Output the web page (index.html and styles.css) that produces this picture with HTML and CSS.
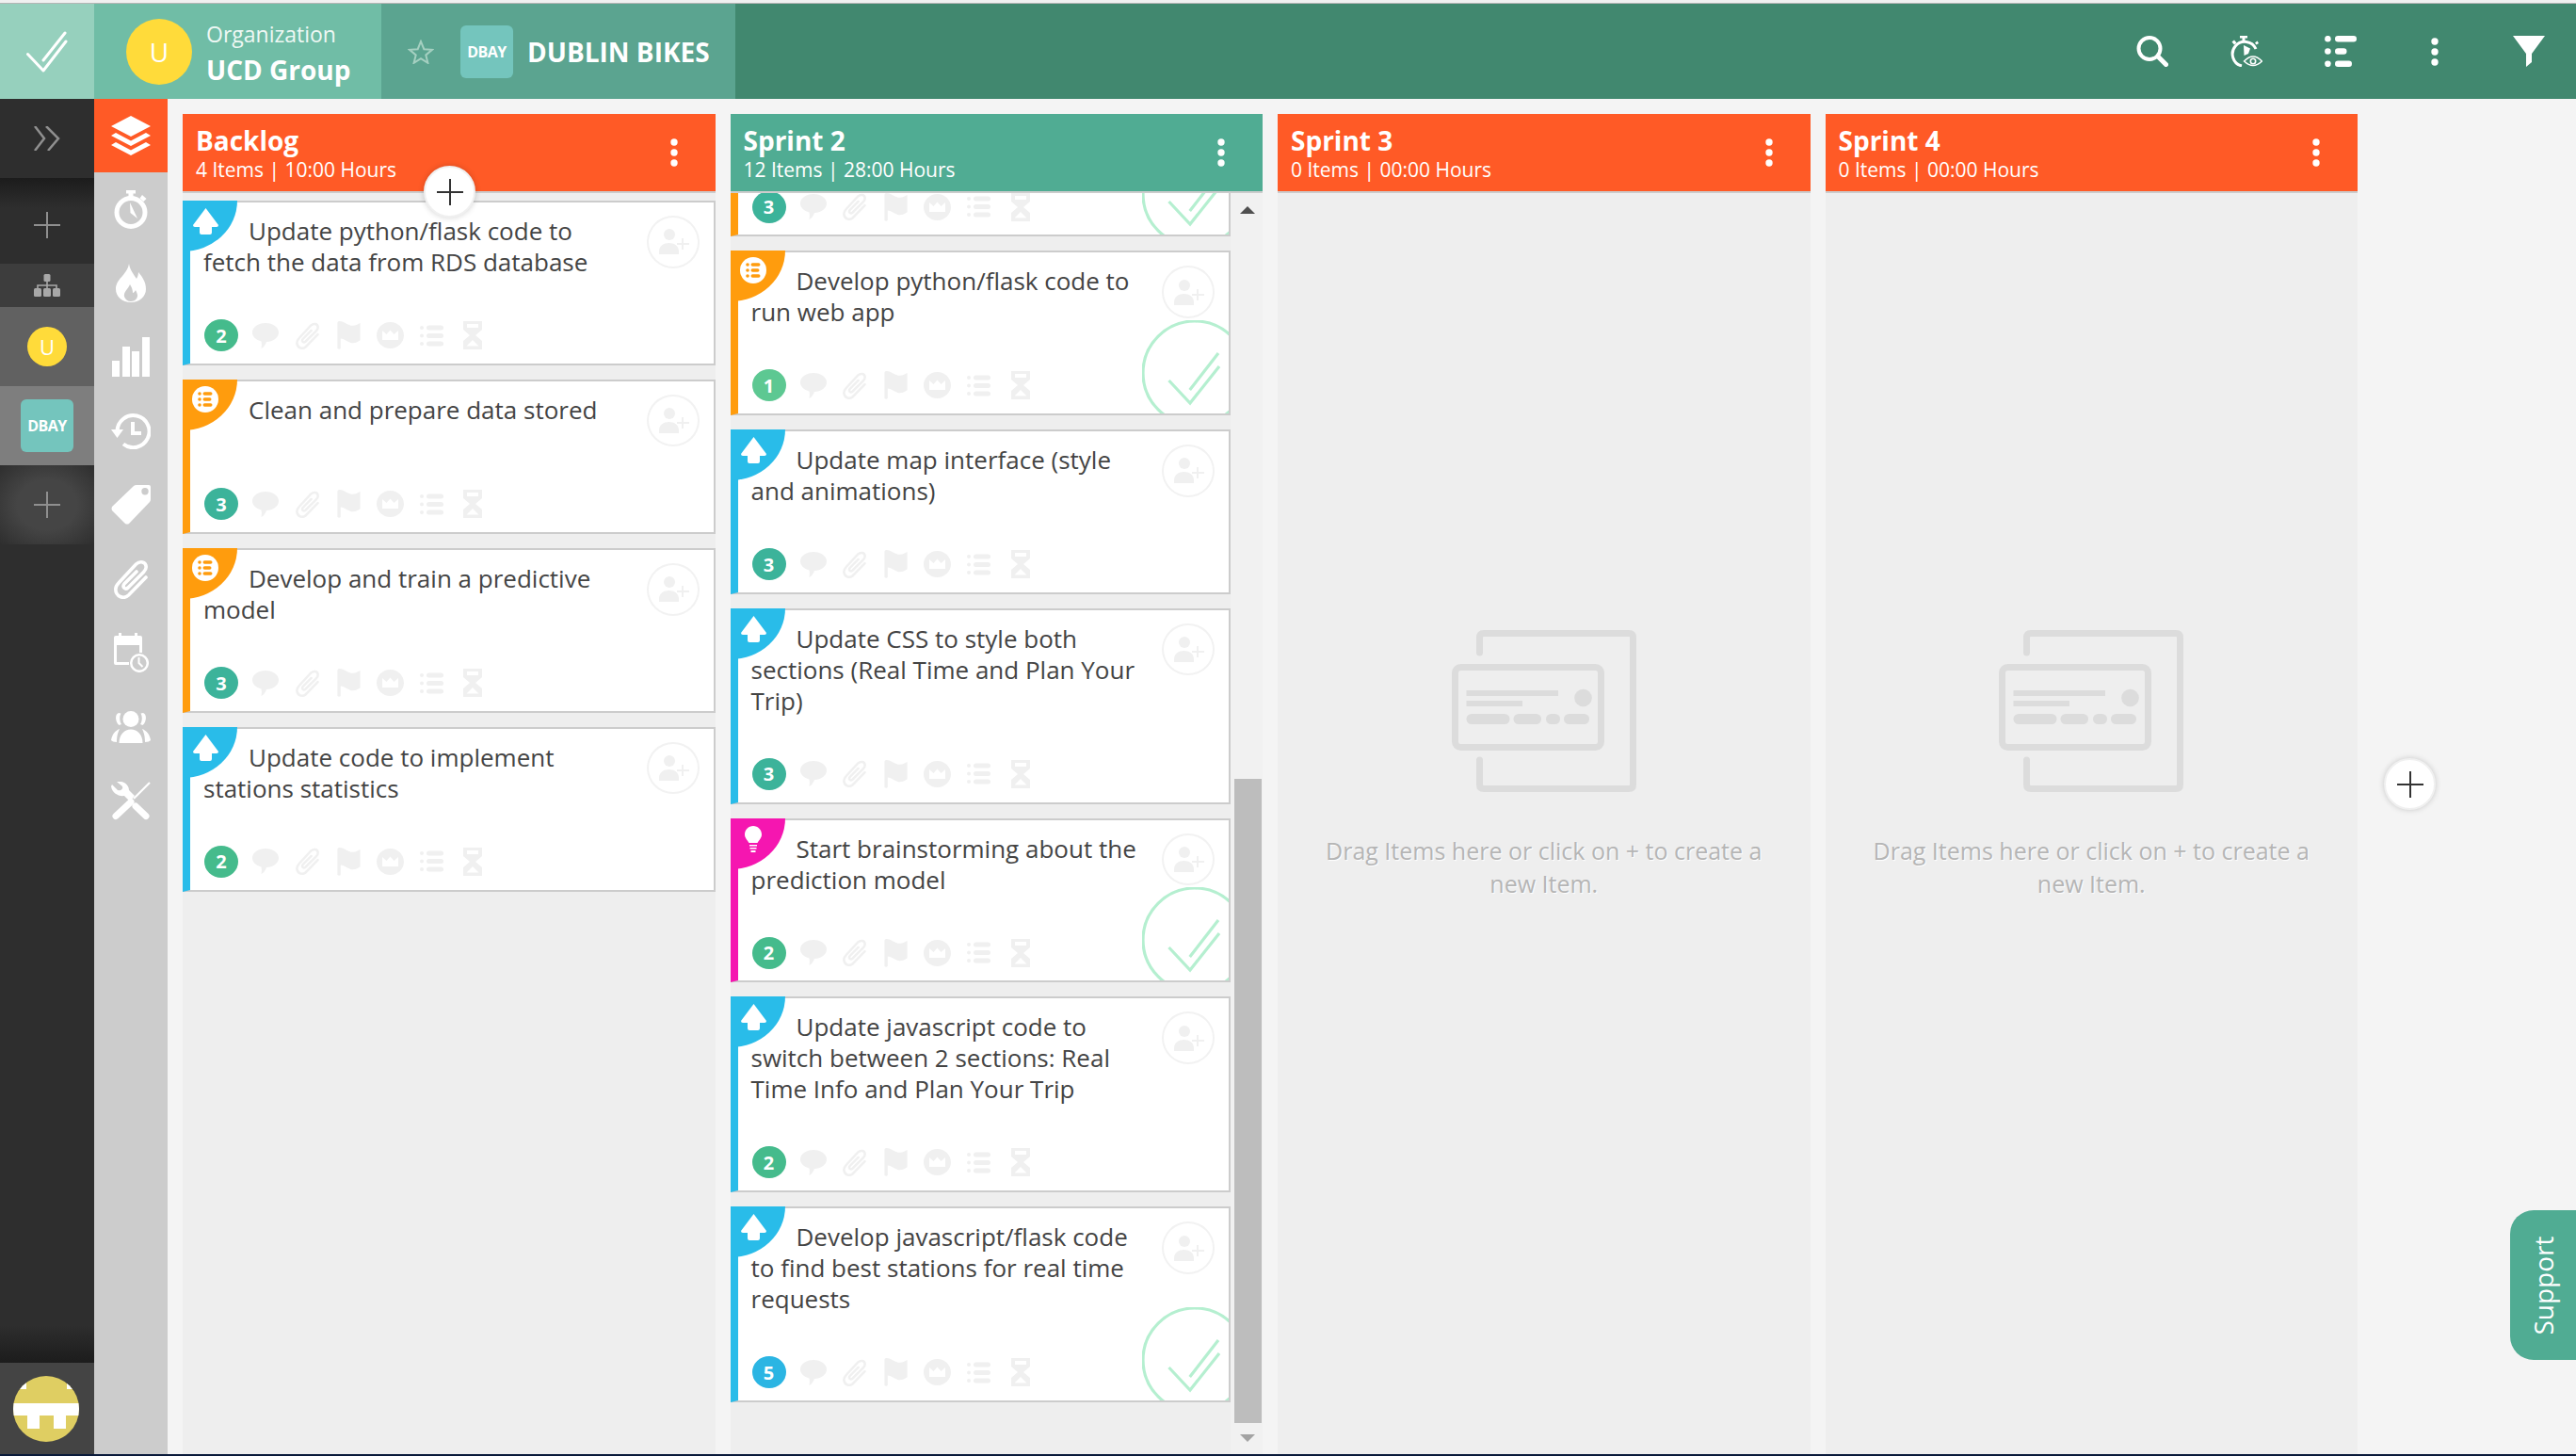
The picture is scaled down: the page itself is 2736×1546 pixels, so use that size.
FILE: index.html
```html
<!DOCTYPE html>
<html lang="en">
<head>
    <meta charset="UTF-8">
    <title>Dublin Bikes</title>
    <link rel="stylesheet" href="styles.css">
</head>
<body>

<svg class="defs" width="0" height="0">
    <symbol id="i-check" viewBox="0 0 44 44">
        <path d="M1.500 24.500 L18 42 L42 11 M18 31 L41 2" fill="none" stroke="currentColor" stroke-width="3" stroke-linecap="round" stroke-linejoin="round"/>
    </symbol>
    <symbol id="i-star" viewBox="0 0 28 26">
        <path d="M14 2 L17.3 10.2 L26 10.8 L19.3 16.4 L21.4 24.8 L14 20.2 L6.6 24.8 L8.7 16.4 L2 10.8 L10.7 10.2 Z" fill="none" stroke="currentColor" stroke-width="2"/>
    </symbol>
    <symbol id="i-search" viewBox="0 0 34 33">
        <circle cx="14" cy="13.5" r="11.5" fill="none" stroke="currentColor" stroke-width="4"/>
        <path d="M23 22 L31.5 30.5" stroke="currentColor" stroke-width="5" stroke-linecap="round"/>
    </symbol>
    <symbol id="i-watch-eye" viewBox="0 0 34 33">
        <path d="M27 14 A13 13 0 1 0 12 32" fill="none" stroke="currentColor" stroke-width="3"/>
        <path d="M10 0 H18 V2.5 H15.5 V6 H12.5 V2.5 H10 Z M1.5 6.5 L4 4.5 L6.5 7.5 L4 9.5 Z M26 7.5 L28.5 5.5 L30 8 L27.5 9.5 Z M14 10 L21 13.5 L19 19 L14.5 21 Z" fill="currentColor"/>
        <path d="M14.5 27 Q24 17 33.5 27 Q24 36 14.5 27 Z" fill="none" stroke="currentColor" stroke-width="1.5"/>
        <circle cx="24" cy="27" r="2.7" fill="none" stroke="currentColor" stroke-width="1.6"/>
    </symbol>
    <symbol id="i-list" viewBox="0 0 34 33">
        <circle cx="3.4" cy="3.2" r="3.3" fill="currentColor"/>
        <circle cx="3.4" cy="16.5" r="3.3" fill="currentColor"/>
        <circle cx="3.4" cy="29.8" r="3.3" fill="currentColor"/>
        <rect x="11" y="0" width="23" height="6.4" rx="3.2" fill="currentColor"/>
        <rect x="11" y="13.3" width="12.5" height="6.4" rx="3.2" fill="currentColor"/>
        <rect x="11" y="26.6" width="18" height="6.4" rx="3.2" fill="currentColor"/>
    </symbol>
    <symbol id="i-kebab" viewBox="0 0 8 30">
        <circle cx="4" cy="4" r="3.7" fill="currentColor"/>
        <circle cx="4" cy="15" r="3.7" fill="currentColor"/>
        <circle cx="4" cy="26" r="3.7" fill="currentColor"/>
    </symbol>
    <symbol id="i-funnel" viewBox="0 0 34 33">
        <path d="M0 0 H34 L20 19 V28 L14 33 V19 Z" fill="currentColor"/>
    </symbol>
    <symbol id="i-chevrons" viewBox="0 0 28 26">
        <path d="M1 0 L11 13 L1 26 M13 0 L26 13 L15 26" fill="none" stroke="currentColor" stroke-width="2.5"/>
    </symbol>
    <symbol id="i-plus" viewBox="0 0 28 28">
        <path d="M14 0 V28 M0 14 H28" stroke="currentColor" stroke-width="2"/>
    </symbol>
    <symbol id="i-tree" viewBox="0 0 28 24">
        <rect x="10.5" y="0" width="7" height="8" rx="1.5" fill="currentColor"/>
        <path d="M14 8 V16 M4 16 V12 H24 V16" fill="none" stroke="currentColor" stroke-width="1.6"/>
        <rect x="0" y="15" width="8" height="9" rx="1.5" fill="currentColor"/>
        <rect x="10" y="15" width="8" height="9" rx="1.5" fill="currentColor"/>
        <rect x="20" y="15" width="8" height="9" rx="1.5" fill="currentColor"/>
    </symbol>
    <symbol id="i-layers" viewBox="0 0 42 42">
        <path d="M21 0 L42 11 L21 22 L0 11 Z M0 21 L5 18 L21 26.5 L37 18 L42 21 L21 32 Z M0 31 L5 28 L21 36.5 L37 28 L42 31 L21 42 Z" fill="currentColor"/>
    </symbol>
    <symbol id="i-stopwatch" viewBox="0 0 36 41">
        <circle cx="18" cy="23.5" r="15" fill="none" stroke="currentColor" stroke-width="5"/>
        <path d="M13 0 H23 V3.5 H20.5 V8 H15.5 V3.5 H13 Z M30 5 L34.5 9 L31.5 12 L27.5 8.5 Z M17 13 L25 30 L17.5 24 Z" fill="currentColor"/>
    </symbol>
    <symbol id="i-fire" viewBox="0 0 32 41">
        <path fill-rule="evenodd" d="M14 0 C15 7 19 11 22 16 C23 14 24 12 24 9 C29 15 32 20 32 27 C32 35 25 41 16 41 C7 41 0 35 0 27 C0 16 12 12 14 0 Z M15 22 C13 27 8 30 9 35 C10 38 13 40 16 40 C20 40 23 37 23 34 C23 32 22 30 21 28 C20 30 19 31 18 31 C18 28 17 25 15 22 Z" fill="currentColor"/>
    </symbol>
    <symbol id="i-bars" viewBox="0 0 40 42">
        <rect x="0" y="25" width="8" height="17" fill="currentColor"/>
        <rect x="11" y="10" width="8" height="32" fill="currentColor"/>
        <rect x="21" y="15" width="8" height="27" fill="currentColor"/>
        <rect x="32" y="0" width="8" height="42" fill="currentColor"/>
    </symbol>
    <symbol id="i-history" viewBox="0 0 42 38">
        <path d="M6.5 19 A17 17 0 1 1 13 32.5" fill="none" stroke="currentColor" stroke-width="4"/>
        <path d="M0 17 H13 L6.5 26 Z" fill="currentColor"/>
        <path d="M23 9 V21 H32" fill="none" stroke="currentColor" stroke-width="4"/>
    </symbol>
    <symbol id="i-tag" viewBox="0 0 42 42">
        <path fill-rule="evenodd" d="M1 23 L24 1 Q25 0 27 0 H40 Q42 0 42 2 V15 Q42 17 41 18 L19 41 Q17 42 15 41 L1 27 Q0 25 1 23 Z M36 3 A3.7 3.7 0 1 0 36.01 10.4 A3.7 3.7 0 1 0 36 3 Z" fill="currentColor"/>
    </symbol>
    <symbol id="i-clip" viewBox="0 0 36 42">
        <path d="M34 19 L15.500 38 C10 43 2 39 1.800 32 C1.800 29 3 27 5 25 L23.500 5 C27.500 1.500 34 2 34.200 8 C34.200 10.500 33 12 31.500 13.500 L15 30 C12 32.500 8.500 29.500 11 26 L24 13" fill="none" stroke="currentColor" stroke-width="3.600" stroke-linecap="round"/>
    </symbol>
    <symbol id="i-calendar" viewBox="0 0 37 42">
        <path d="M5 0 H8 V3 H22 V0 H25 V3 H28 Q30 3 30 5 V13 H0 V5 Q0 3 2 3 H5 Z M0 13 H3 V31 H16 V34 H2 Q0 34 0 32 Z M27 13 H30 V21 H27 Z" fill="currentColor"/>
        <circle cx="27" cy="32" r="8.8" fill="none" stroke="currentColor" stroke-width="2.5"/>
        <path d="M26.5 26 V32 L30.5 36" fill="none" stroke="currentColor" stroke-width="2"/>
    </symbol>
    <symbol id="i-users" viewBox="0 0 42 34">
        <circle cx="21" cy="8.5" r="8.5" fill="currentColor"/>
        <path d="M8.5 34 C8.5 25 14 19.5 21 19.5 C28 19.5 33.5 25 33.5 34 Z M8 2 C4 3 4 11 8.5 15 L11 14 C9 11 8.5 6 10.5 2.5 Z M34 2 C38 3 38 11 33.5 15 L31 14 C33 11 33.5 6 31.5 2.5 Z M0 31 C1 25 4 21 9 19 C7.5 22 6 26 6 33 C3 33 1 32 0 31 Z M42 31 C41 25 38 21 33 19 C34.5 22 36 26 36 33 C39 33 41 32 42 31 Z" fill="currentColor"/>
    </symbol>
    <symbol id="i-tools" viewBox="0 0 42 41">
        <path d="M41 1 L24 18" stroke="currentColor" stroke-width="2.2"/>
        <path d="M5 36.5 L21 21.5" stroke="currentColor" stroke-width="7" stroke-linecap="round"/>
        <path d="M26 26 L37 36.5" stroke="currentColor" stroke-width="7" stroke-linecap="round"/>
        <path d="M6 0 L11 0 C16 1 19 5 19 9 L25 15 L20 21 L14 15 C8 16 1 12 0 5 L1 3 L7 9 C10 10 13 8 12 5 Z" fill="currentColor"/>
    </symbol>
    <symbol id="i-up" viewBox="0 0 27 28">
        <path d="M13.5 0 L27 18 Q27 20 25 20 H20 V26 Q20 28 18 28 H9 Q7 28 7 26 V20 H2 Q0 20 0 18 Z" fill="currentColor"/>
    </symbol>
    <symbol id="i-task" viewBox="0 0 28 28">
        <circle cx="14" cy="14" r="14" fill="#fff"/>
        <g fill="currentColor">
            <circle cx="8" cy="8" r="1.8"/><circle cx="8" cy="14" r="1.8"/><circle cx="8" cy="20" r="1.8"/>
            <rect x="11.5" y="6.2" width="10" height="3.6" rx="1.8"/>
            <rect x="11.5" y="12.2" width="9" height="3.6" rx="1.8"/>
            <rect x="11.5" y="18.2" width="10" height="3.6" rx="1.8"/>
        </g>
    </symbol>
    <symbol id="i-bulb" viewBox="0 0 18 28">
        <path d="M9 0 C14 0 18 4 18 9 C18 13 15 15 13.5 18 H4.5 C3 15 0 13 0 9 C0 4 4 0 9 0 Z M5 20 H13 V21.5 H5 Z M5.5 23 H12.5 V24.5 H5.5 Z M6.5 26 H11.5 V28 H6.5 Z" fill="currentColor"/>
    </symbol>
    <symbol id="i-user-plus" viewBox="0 0 32 27">
        <circle cx="11" cy="6" r="6" fill="currentColor"/>
        <path d="M0 27 V24 C0 18 5 15 10.500 15 C16 15 21 18 21 24 V27 Z" fill="currentColor"/>
        <path d="M25 10 V22 M19 16 H32" stroke="currentColor" stroke-width="2"/>
    </symbol>
    <symbol id="i-comment" viewBox="0 0 28 27">
        <path d="M14 0 C22 0 28 4.5 28 10 C28 15.5 22 20 15 20 C14 23 12 26 9.5 27 C10 24 10 21.500 9.500 19.500 C4 18 0 14.500 0 10 C0 4.500 6 0 14 0 Z" fill="currentColor"/>
    </symbol>
    <symbol id="i-flag" viewBox="0 0 25 31">
        <path d="M0 2 Q0 0 2 0 C8 0 11 5 17 5 C20 5 23 3 25 2 V21 C22 23 20 24 17 24 C12 24 8 19 3.500 19 V30 Q2 31.500 0 30 Z" fill="currentColor"/>
    </symbol>
    <symbol id="i-crown" viewBox="0 0 29 28">
        <path fill-rule="evenodd" d="M14.500 0 C22.500 0 29 6.300 29 14 C29 21.700 22.500 28 14.500 28 C6.500 28 0 21.700 0 14 C0 6.300 6.500 0 14.500 0 Z M6 9 V19 H23 V9 L18.500 13 L14.500 8.500 L10.500 13 Z" fill="currentColor"/>
    </symbol>
    <symbol id="i-lines" viewBox="0 0 25 23">
        <circle cx="2" cy="3" r="2" fill="currentColor"/>
        <circle cx="2" cy="11.500" r="2" fill="currentColor"/>
        <circle cx="2" cy="20" r="2" fill="currentColor"/>
        <rect x="7" y="0.500" width="18" height="5" rx="2.500" fill="currentColor"/>
        <rect x="7" y="9" width="18" height="5" rx="2.500" fill="currentColor"/>
        <rect x="7" y="17.500" width="18" height="5" rx="2.500" fill="currentColor"/>
    </symbol>
    <symbol id="i-hourglass" viewBox="0 0 20 30">
        <path fill-rule="evenodd" d="M0 0 H20 V9 L13 15 L20 21 V30 H0 V21 L7 15 L0 9 Z M4 3 V7 H16 V3 Z M10 20 L3.500 26.500 H16.500 Z" fill="currentColor"/>
    </symbol>
    <symbol id="i-empty" viewBox="0 0 196 172">
        <path d="M29.500 24 V8 Q29.500 3.500 34 3.500 H188 Q192.500 3.500 192.500 8 V164 Q192.500 168.500 188 168.500 H34 Q29.500 168.500 29.500 164 V138" fill="none" stroke="currentColor" stroke-width="7" stroke-linecap="round"/>
        <rect x="3.500" y="39.500" width="155" height="85" rx="6" fill="none" stroke="currentColor" stroke-width="7"/>
        <rect x="15.500" y="64" width="97.500" height="6" fill="currentColor"/>
        <rect x="15.500" y="75" width="59.500" height="6" fill="currentColor"/>
        <rect x="15.500" y="89" width="46" height="11" rx="5.500" fill="currentColor"/>
        <rect x="65.500" y="89" width="29.500" height="11" rx="5.500" fill="currentColor"/>
        <rect x="100" y="89" width="15" height="11" rx="5.500" fill="currentColor"/>
        <rect x="119" y="89" width="27" height="11" rx="5.500" fill="currentColor"/>
        <circle cx="139.500" cy="72" r="9.300" fill="currentColor"/>
    </symbol>
</svg>

<div class="topline"></div>

<header class="topbar">
    <div class="logo"><svg class="logo-check"><use href="#i-check"/></svg></div>
    <div class="org">
        <span class="org-avatar">U</span>
        <div class="org-text">
            <div class="org-label">Organization</div>
            <div class="org-name">UCD Group</div>
        </div>
    </div>
    <div class="project">
        <svg class="star"><use href="#i-star"/></svg>
        <span class="dbay">DBAY</span>
        <span class="project-name">DUBLIN BIKES</span>
    </div>
    <div class="tools">
        <svg class="tool"><use href="#i-search"/></svg>
        <svg class="tool"><use href="#i-watch-eye"/></svg>
        <svg class="tool"><use href="#i-list"/></svg>
        <svg class="tool tool-kebab"><use href="#i-kebab"/></svg>
        <svg class="tool"><use href="#i-funnel"/></svg>
    </div>
</header>

<div class="app">
    <nav class="rail">
        <div class="rail-item rail-toggle"><svg class="rail-chev"><use href="#i-chevrons"/></svg></div>
        <div class="rail-item rail-add"><svg class="rail-plus"><use href="#i-plus"/></svg></div>
        <div class="rail-item rail-tree"><svg class="rail-tree-ic"><use href="#i-tree"/></svg></div>
        <div class="rail-item rail-org"><span class="rail-avatar">U</span></div>
        <div class="rail-item rail-proj"><span class="dbay">DBAY</span></div>
        <div class="rail-item rail-add2"><svg class="rail-plus"><use href="#i-plus"/></svg></div>
        <div class="rail-space"></div>
        <div class="rail-user">
            <span class="user-pic">
                <i class="pix pix1"></i><i class="pix pix2"></i><i class="pix pix3"></i><i class="pix pix4"></i><i class="pix pix5"></i>
            </span>
        </div>
    </nav>

    <nav class="iconrail">
        <div class="icon-item active"><svg class="ic-layers"><use href="#i-layers"/></svg></div>
        <div class="icon-item"><svg class="ic-watch"><use href="#i-stopwatch"/></svg></div>
        <div class="icon-item"><svg class="ic-fire"><use href="#i-fire"/></svg></div>
        <div class="icon-item"><svg class="ic-bars"><use href="#i-bars"/></svg></div>
        <div class="icon-item"><svg class="ic-history"><use href="#i-history"/></svg></div>
        <div class="icon-item"><svg class="ic-tag"><use href="#i-tag"/></svg></div>
        <div class="icon-item"><svg class="ic-clip"><use href="#i-clip"/></svg></div>
        <div class="icon-item"><svg class="ic-cal"><use href="#i-calendar"/></svg></div>
        <div class="icon-item"><svg class="ic-users"><use href="#i-users"/></svg></div>
        <div class="icon-item"><svg class="ic-tools"><use href="#i-tools"/></svg></div>
    </nav>

    <main class="board">

        <section class="col">
            <div class="col-head orange">
                <div>
                    <div class="col-title">Backlog</div>
                    <div class="col-sub">4 Items | 10:00 Hours</div>
                </div>
                <svg class="col-menu"><use href="#i-kebab"/></svg>
            </div>
            <button class="add-btn add-item"><svg class="add-plus"><use href="#i-plus"/></svg></button>
            <div class="col-body backlog">
                <article class="card blue">
                    <span class="corner"><svg class="c-up"><use href="#i-up"/></svg></span>
                    <div class="card-main">
                        <span class="assign"><svg><use href="#i-user-plus"/></svg></span>
                        <p class="card-title">Update python/flask code to fetch the data from RDS database</p>
                    </div>
                    <div class="card-foot">
                        <span class="badge g2">2</span>
                        <span class="fi"><svg class="f-comment"><use href="#i-comment"/></svg></span>
                        <span class="fi"><svg class="f-clip"><use href="#i-clip"/></svg></span>
                        <span class="fi"><svg class="f-flag"><use href="#i-flag"/></svg></span>
                        <span class="fi"><svg class="f-crown"><use href="#i-crown"/></svg></span>
                        <span class="fi"><svg class="f-lines"><use href="#i-lines"/></svg></span>
                        <span class="fi"><svg class="f-hour"><use href="#i-hourglass"/></svg></span>
                    </div>
                </article>
                <article class="card amber">
                    <span class="corner"><svg class="c-task"><use href="#i-task"/></svg></span>
                    <div class="card-main">
                        <span class="assign"><svg><use href="#i-user-plus"/></svg></span>
                        <p class="card-title">Clean and prepare data stored</p>
                    </div>
                    <div class="card-foot">
                        <span class="badge g3">3</span>
                        <span class="fi"><svg class="f-comment"><use href="#i-comment"/></svg></span>
                        <span class="fi"><svg class="f-clip"><use href="#i-clip"/></svg></span>
                        <span class="fi"><svg class="f-flag"><use href="#i-flag"/></svg></span>
                        <span class="fi"><svg class="f-crown"><use href="#i-crown"/></svg></span>
                        <span class="fi"><svg class="f-lines"><use href="#i-lines"/></svg></span>
                        <span class="fi"><svg class="f-hour"><use href="#i-hourglass"/></svg></span>
                    </div>
                </article>
                <article class="card amber">
                    <span class="corner"><svg class="c-task"><use href="#i-task"/></svg></span>
                    <div class="card-main">
                        <span class="assign"><svg><use href="#i-user-plus"/></svg></span>
                        <p class="card-title">Develop and train a predictive model</p>
                    </div>
                    <div class="card-foot">
                        <span class="badge g3">3</span>
                        <span class="fi"><svg class="f-comment"><use href="#i-comment"/></svg></span>
                        <span class="fi"><svg class="f-clip"><use href="#i-clip"/></svg></span>
                        <span class="fi"><svg class="f-flag"><use href="#i-flag"/></svg></span>
                        <span class="fi"><svg class="f-crown"><use href="#i-crown"/></svg></span>
                        <span class="fi"><svg class="f-lines"><use href="#i-lines"/></svg></span>
                        <span class="fi"><svg class="f-hour"><use href="#i-hourglass"/></svg></span>
                    </div>
                </article>
                <article class="card blue">
                    <span class="corner"><svg class="c-up"><use href="#i-up"/></svg></span>
                    <div class="card-main">
                        <span class="assign"><svg><use href="#i-user-plus"/></svg></span>
                        <p class="card-title">Update code to implement stations statistics</p>
                    </div>
                    <div class="card-foot">
                        <span class="badge g2">2</span>
                        <span class="fi"><svg class="f-comment"><use href="#i-comment"/></svg></span>
                        <span class="fi"><svg class="f-clip"><use href="#i-clip"/></svg></span>
                        <span class="fi"><svg class="f-flag"><use href="#i-flag"/></svg></span>
                        <span class="fi"><svg class="f-crown"><use href="#i-crown"/></svg></span>
                        <span class="fi"><svg class="f-lines"><use href="#i-lines"/></svg></span>
                        <span class="fi"><svg class="f-hour"><use href="#i-hourglass"/></svg></span>
                    </div>
                </article>
            </div>
        </section>

        <section class="col">
            <div class="col-head green">
                <div>
                    <div class="col-title">Sprint 2</div>
                    <div class="col-sub">12 Items | 28:00 Hours</div>
                </div>
                <svg class="col-menu"><use href="#i-kebab"/></svg>
            </div>
            <div class="col-scroll">
                <div class="col-list">
                    <article class="card amber scrolled-off">
                        <div class="done"><svg class="ring" viewBox="0 0 112 112"><circle cx="56" cy="56" r="55"/><path d="M28.500 64 L51 88 L82 49 M50.700 74 L81 35"/></svg></div>
                        <div class="card-main">
                            <span class="assign"><svg><use href="#i-user-plus"/></svg></span>
                        </div>
                        <div class="card-foot">
                            <span class="badge g3">3</span>
                            <span class="fi"><svg class="f-comment"><use href="#i-comment"/></svg></span>
                            <span class="fi"><svg class="f-clip"><use href="#i-clip"/></svg></span>
                            <span class="fi"><svg class="f-flag"><use href="#i-flag"/></svg></span>
                            <span class="fi"><svg class="f-crown"><use href="#i-crown"/></svg></span>
                            <span class="fi"><svg class="f-lines"><use href="#i-lines"/></svg></span>
                            <span class="fi"><svg class="f-hour"><use href="#i-hourglass"/></svg></span>
                        </div>
                    </article>
                    <article class="card amber">
                        <span class="corner"><svg class="c-task"><use href="#i-task"/></svg></span>
                        <div class="done"><svg class="ring" viewBox="0 0 112 112"><circle cx="56" cy="56" r="55"/><path d="M28.500 64 L51 88 L82 49 M50.700 74 L81 35"/></svg></div>
                        <div class="card-main">
                            <span class="assign"><svg><use href="#i-user-plus"/></svg></span>
                            <p class="card-title">Develop python/flask code to run web app</p>
                        </div>
                        <div class="card-foot">
                            <span class="badge g1">1</span>
                            <span class="fi"><svg class="f-comment"><use href="#i-comment"/></svg></span>
                            <span class="fi"><svg class="f-clip"><use href="#i-clip"/></svg></span>
                            <span class="fi"><svg class="f-flag"><use href="#i-flag"/></svg></span>
                            <span class="fi"><svg class="f-crown"><use href="#i-crown"/></svg></span>
                            <span class="fi"><svg class="f-lines"><use href="#i-lines"/></svg></span>
                            <span class="fi"><svg class="f-hour"><use href="#i-hourglass"/></svg></span>
                        </div>
                    </article>
                    <article class="card blue">
                        <span class="corner"><svg class="c-up"><use href="#i-up"/></svg></span>
                        <div class="card-main">
                            <span class="assign"><svg><use href="#i-user-plus"/></svg></span>
                            <p class="card-title">Update map interface (style and animations)</p>
                        </div>
                        <div class="card-foot">
                            <span class="badge g3">3</span>
                            <span class="fi"><svg class="f-comment"><use href="#i-comment"/></svg></span>
                            <span class="fi"><svg class="f-clip"><use href="#i-clip"/></svg></span>
                            <span class="fi"><svg class="f-flag"><use href="#i-flag"/></svg></span>
                            <span class="fi"><svg class="f-crown"><use href="#i-crown"/></svg></span>
                            <span class="fi"><svg class="f-lines"><use href="#i-lines"/></svg></span>
                            <span class="fi"><svg class="f-hour"><use href="#i-hourglass"/></svg></span>
                        </div>
                    </article>
                    <article class="card blue">
                        <span class="corner"><svg class="c-up"><use href="#i-up"/></svg></span>
                        <div class="card-main">
                            <span class="assign"><svg><use href="#i-user-plus"/></svg></span>
                            <p class="card-title">Update CSS to style both sections (Real Time and Plan Your Trip)</p>
                        </div>
                        <div class="card-foot">
                            <span class="badge g3">3</span>
                            <span class="fi"><svg class="f-comment"><use href="#i-comment"/></svg></span>
                            <span class="fi"><svg class="f-clip"><use href="#i-clip"/></svg></span>
                            <span class="fi"><svg class="f-flag"><use href="#i-flag"/></svg></span>
                            <span class="fi"><svg class="f-crown"><use href="#i-crown"/></svg></span>
                            <span class="fi"><svg class="f-lines"><use href="#i-lines"/></svg></span>
                            <span class="fi"><svg class="f-hour"><use href="#i-hourglass"/></svg></span>
                        </div>
                    </article>
                    <article class="card pink">
                        <span class="corner"><svg class="c-bulb"><use href="#i-bulb"/></svg></span>
                        <div class="done"><svg class="ring" viewBox="0 0 112 112"><circle cx="56" cy="56" r="55"/><path d="M28.500 64 L51 88 L82 49 M50.700 74 L81 35"/></svg></div>
                        <div class="card-main">
                            <span class="assign"><svg><use href="#i-user-plus"/></svg></span>
                            <p class="card-title">Start brainstorming about the prediction model</p>
                        </div>
                        <div class="card-foot">
                            <span class="badge g2">2</span>
                            <span class="fi"><svg class="f-comment"><use href="#i-comment"/></svg></span>
                            <span class="fi"><svg class="f-clip"><use href="#i-clip"/></svg></span>
                            <span class="fi"><svg class="f-flag"><use href="#i-flag"/></svg></span>
                            <span class="fi"><svg class="f-crown"><use href="#i-crown"/></svg></span>
                            <span class="fi"><svg class="f-lines"><use href="#i-lines"/></svg></span>
                            <span class="fi"><svg class="f-hour"><use href="#i-hourglass"/></svg></span>
                        </div>
                    </article>
                    <article class="card blue">
                        <span class="corner"><svg class="c-up"><use href="#i-up"/></svg></span>
                        <div class="card-main">
                            <span class="assign"><svg><use href="#i-user-plus"/></svg></span>
                            <p class="card-title">Update javascript code to switch between 2 sections: Real Time Info and Plan Your Trip</p>
                        </div>
                        <div class="card-foot">
                            <span class="badge g2">2</span>
                            <span class="fi"><svg class="f-comment"><use href="#i-comment"/></svg></span>
                            <span class="fi"><svg class="f-clip"><use href="#i-clip"/></svg></span>
                            <span class="fi"><svg class="f-flag"><use href="#i-flag"/></svg></span>
                            <span class="fi"><svg class="f-crown"><use href="#i-crown"/></svg></span>
                            <span class="fi"><svg class="f-lines"><use href="#i-lines"/></svg></span>
                            <span class="fi"><svg class="f-hour"><use href="#i-hourglass"/></svg></span>
                        </div>
                    </article>
                    <article class="card blue">
                        <span class="corner"><svg class="c-up"><use href="#i-up"/></svg></span>
                        <div class="done"><svg class="ring" viewBox="0 0 112 112"><circle cx="56" cy="56" r="55"/><path d="M28.500 64 L51 88 L82 49 M50.700 74 L81 35"/></svg></div>
                        <div class="card-main">
                            <span class="assign"><svg><use href="#i-user-plus"/></svg></span>
                            <p class="card-title">Develop javascript/flask code to find best stations for real time requests</p>
                        </div>
                        <div class="card-foot">
                            <span class="badge b5">5</span>
                            <span class="fi"><svg class="f-comment"><use href="#i-comment"/></svg></span>
                            <span class="fi"><svg class="f-clip"><use href="#i-clip"/></svg></span>
                            <span class="fi"><svg class="f-flag"><use href="#i-flag"/></svg></span>
                            <span class="fi"><svg class="f-crown"><use href="#i-crown"/></svg></span>
                            <span class="fi"><svg class="f-lines"><use href="#i-lines"/></svg></span>
                            <span class="fi"><svg class="f-hour"><use href="#i-hourglass"/></svg></span>
                        </div>
                    </article>
                </div>
                <div class="scrollbar">
                    <span class="sb-up"></span>
                    <span class="sb-thumb"></span>
                    <span class="sb-down"></span>
                </div>
            </div>
        </section>

        <section class="col">
            <div class="col-head orange">
                <div>
                    <div class="col-title">Sprint 3</div>
                    <div class="col-sub">0 Items | 00:00 Hours</div>
                </div>
                <svg class="col-menu"><use href="#i-kebab"/></svg>
            </div>
            <div class="col-body empty">
                <svg class="empty-ic"><use href="#i-empty"/></svg>
                <p class="empty-text">Drag Items here or click on + to create a new Item.</p>
            </div>
        </section>

        <section class="col">
            <div class="col-head orange">
                <div>
                    <div class="col-title">Sprint 4</div>
                    <div class="col-sub">0 Items | 00:00 Hours</div>
                </div>
                <svg class="col-menu"><use href="#i-kebab"/></svg>
            </div>
            <div class="col-body empty">
                <svg class="empty-ic"><use href="#i-empty"/></svg>
                <p class="empty-text">Drag Items here or click on + to create a new Item.</p>
            </div>
        </section>

        <button class="add-btn add-col"><svg class="add-plus"><use href="#i-plus"/></svg></button>
    </main>
</div>

<div class="bottomline"></div>
<div class="support"><span>Support</span></div>

</body>
</html>
```

FILE: styles.css
```css
* { box-sizing: border-box; }

body {
    margin: 0;
    width: 2736px;
    height: 1546px;
    overflow: hidden;
    background: #f4f4f4;
    font-family: "Open Sans", sans-serif;
    color: #444;
}

svg { display: block; }
.defs { position: absolute; }

.topline {
    height: 4px;
    background: #f0f0f0;
    border-bottom: 1px solid #b5b5b5;
}

.topbar {
    display: flex;
    height: 101px;
    background: #41886f;
    color: #fff;
}

.logo {
    width: 100px;
    background: #96d0bd;
    display: flex;
    align-items: center;
    justify-content: center;
}
.logo-check { width: 44px; height: 44px; color: #fff; }

.org {
    width: 305px;
    background: #70bda6;
    display: flex;
    align-items: center;
    padding-left: 34px;
    gap: 15px;
}
.org-avatar {
    width: 70px;
    height: 70px;
    border-radius: 50%;
    background: #ffdb3a;
    display: flex;
    align-items: center;
    justify-content: center;
    font-size: 28px;
}
.org-text { padding-top: 2px; }
.org-label { font-size: 23px; line-height: 36px; color: #eef8f4; }
.org-name { font-size: 28px; line-height: 38px; font-weight: 700; margin-top: 1px; }

.project {
    width: 376px;
    background: #5ba490;
    display: flex;
    align-items: center;
    padding-left: 28px;
}
.star { width: 28px; height: 26px; color: #a5d0c1; margin-right: 28px; }
.dbay {
    width: 56px;
    height: 56px;
    border-radius: 6px;
    background: #74c5bd;
    display: flex;
    align-items: center;
    justify-content: center;
    font-size: 16px;
    font-weight: 700;
    letter-spacing: -0.5px;
    color: #fff;
}
.project-name { margin-left: 15px; font-size: 28px; font-weight: 700; }

.tools {
    flex: 1;
    display: flex;
    justify-content: flex-end;
    align-items: center;
    padding-right: 33px;
    gap: 66px;
}
.tool { width: 34px; height: 33px; color: #fff; }
.tool-kebab { width: 8px; height: 30px; margin: 0 13px; }

.app { display: flex; height: 1439px; }

/* dark rail */
.rail {
    width: 100px;
    background: #2e2e2e;
    display: flex;
    flex-direction: column;
    color: #8f8f8f;
}
.rail-item {
    display: flex;
    align-items: center;
    justify-content: center;
    flex: none;
}
.rail-toggle { height: 84px; }
.rail-add { height: 91px; padding-top: 8px; background: linear-gradient(#1c1c1c, #2e2e2e 35%); }
.rail-tree { height: 46px; background: #3d3d3d; }
.rail-org { height: 84px; background: #616161; }
.rail-proj { height: 84px; background: #7e7e7e; }
.rail-add2 { height: 84px; background: radial-gradient(ellipse at center, #454545 45%, #2e2e2e 100%); }
.rail-space { flex: 1; background: linear-gradient(#2e2e2e calc(100% - 40px), #1c1c1c); }
.rail-chev { width: 28px; height: 26px; }
.rail-plus { width: 28px; height: 28px; }
.rail-tree-ic { width: 28px; height: 24px; color: #a8a8a8; }
.rail-avatar {
    width: 42px;
    height: 42px;
    border-radius: 50%;
    background: #ffdb3a;
    color: #fff;
    display: flex;
    align-items: center;
    justify-content: center;
    font-size: 22px;
}
.rail-user {
    height: 97px;
    background: #444;
    padding: 14px 0 0 14px;
}
.user-pic {
    display: block;
    position: relative;
    width: 70px;
    height: 70px;
    border-radius: 50%;
    background: #dfce62;
    overflow: hidden;
}
.pix { position: absolute; background: #fff; }
.pix1 { left: 0; top: 29px; width: 70px; height: 13px; }
.pix2 { left: 15px; top: 42px; width: 13px; height: 14px; }
.pix3 { left: 43px; top: 42px; width: 13px; height: 14px; }
.pix4 { left: 7px; top: 7px; width: 7px; height: 7px; }
.pix5 { left: 57px; top: 7px; width: 7px; height: 7px; }

/* icon rail */
.iconrail { width: 78px; background: #ccc; color: #fff; }
.icon-item {
    height: 78.5px;
    display: flex;
    align-items: center;
    justify-content: center;
}
.icon-item.active { height: 78px; background: #ff5a26; }
.ic-layers { width: 42px; height: 42px; }
.ic-watch { width: 36px; height: 41px; }
.ic-fire { width: 32px; height: 41px; }
.ic-bars { width: 40px; height: 42px; }
.ic-history { width: 42px; height: 38px; }
.ic-tag { width: 42px; height: 42px; }
.ic-clip { width: 36px; height: 42px; }
.ic-cal { width: 37px; height: 42px; }
.ic-users { width: 42px; height: 34px; }
.ic-tools { width: 42px; height: 41px; }

/* board */
.board {
    flex: 1;
    display: flex;
    padding: 16px 0 0 16px;
    gap: 16px;
    position: relative;
}
.col {
    position: relative;
    width: 565.5px;
    flex: none;
    background: #eee;
    display: flex;
    flex-direction: column;
}
.col-head {
    height: 84px;
    flex: none;
    border-bottom: 2px solid #ccc;
    padding: 13px 40px 0 14px;
    display: flex;
    justify-content: space-between;
    align-items: flex-start;
    color: #fff;
}
.col-head.orange { background: #ff5a26; }
.col-head.green { background: #50ac93; }
.col-title { font-size: 28px; line-height: 30px; font-weight: 700; }
.col-sub { font-size: 21px; line-height: 28px; margin-top: 2px; }
.col-menu { width: 8px; height: 30px; margin-top: 13px; color: #fff; }

.add-btn {
    width: 55px;
    height: 55px;
    padding: 0;
    border: 2px solid #f0f0f0;
    border-radius: 50%;
    background: #fff;
    box-shadow: 0 0 6px rgba(0, 0, 0, 0.18);
    display: flex;
    align-items: center;
    justify-content: center;
    color: #333;
}
.add-plus { width: 28px; height: 28px; }
.add-item { position: absolute; left: 256px; top: 55px; z-index: 3; }
.add-col { margin: 684px 0 0 12px; flex: none; }

.col-body { flex: 1; }
.backlog { padding-top: 8px; }

.col-scroll { flex: 1; display: flex; min-height: 0; }
.col-list { width: 531px; overflow: hidden; flex: none; }
.scrolled-off { margin-top: -118px; }

.scrollbar {
    flex: 1;
    display: flex;
    flex-direction: column;
    align-items: center;
    padding-left: 3px;
    background: #f1f1f1;
}
.sb-up, .sb-down {
    width: 0;
    height: 0;
    border-left: 8px solid transparent;
    border-right: 8px solid transparent;
}
.sb-up { margin-top: 14px; border-bottom: 8px solid #505050; }
.sb-thumb { width: 29px; height: 684px; margin-top: 600px; background: #bdbdbd; }
.sb-down { margin-top: 12px; border-top: 8px solid #a3a3a3; }

/* cards */
.card {
    position: relative;
    margin-bottom: 15px;
    background: #fff;
    border: 2px solid #ccc;
    border-left-width: 8px;
    padding: 14px 0 12.8px 14px;
}
.card.blue { border-left-color: #29bce9; }
.card.amber { border-left-color: #ff9c0d; }
.card.pink { border-left-color: #f516b0; }

.corner {
    position: absolute;
    left: -8px;
    top: -2px;
    width: 58px;
    height: 54px;
    border-bottom-right-radius: 100%;
    color: #fff;
}
.blue .corner { background: #29bce9; }
.amber .corner { background: #ff9c0d; color: #ff9c0d; }
.pink .corner { background: #f516b0; }
.corner svg { position: absolute; }
.c-up { left: 11px; top: 8px; width: 27px; height: 28px; }
.c-task { left: 10px; top: 7px; width: 28px; height: 28px; }
.c-bulb { left: 15px; top: 8px; width: 18px; height: 28px; }

.card-main { display: flow-root; min-height: 55.5px; position: relative; }
.assign {
    float: right;
    width: 56px;
    height: 55.5px;
    margin: 0 15px 0 12px;
    border: 2px solid #f2f2f2;
    border-radius: 50%;
    display: flex;
    align-items: center;
    justify-content: center;
    color: #f0f0f0;
}
.assign svg { width: 32px; height: 27px; margin-left: 3px; }
.card-title {
    margin: 0;
    font-size: 26px;
    line-height: 33px;
    text-indent: 48px;
    color: #444;
}

.card-foot {
    display: flex;
    align-items: center;
    margin-top: 44px;
    height: 34px;
    color: #f0f0f0;
    position: relative;
}
.badge {
    width: 36px;
    height: 34px;
    margin: 0 7px 0 1px;
    border-radius: 50%;
    display: flex;
    align-items: center;
    justify-content: center;
    color: #fff;
    font-size: 20px;
    font-weight: 700;
}
.g1 { background: #5dc892; }
.g2 { background: #45bb8c; }
.g3 { background: #3cb39a; }
.b5 { background: #2bb5e3; }
.fi {
    width: 44px;
    display: flex;
    justify-content: center;
}
.f-comment { width: 28px; height: 27px; }
.f-clip { width: 25px; height: 29px; }
.f-flag { width: 25px; height: 30px; }
.f-crown { width: 29px; height: 28px; }
.f-lines { width: 25px; height: 23px; }
.f-hour { width: 20px; height: 30px; }

.done {
    position: absolute;
    right: 0;
    bottom: 0;
    width: 92px;
    height: 99px;
    overflow: hidden;
}
.ring {
    width: 112px;
    height: 112px;
    fill: none;
    stroke: #b5efd0;
    stroke-width: 3.2;
}

/* empty columns */
.empty {
    display: flex;
    flex-direction: column;
    align-items: center;
    padding: 464px 40px 0;
}
.empty-ic { width: 196px; height: 172px; color: #dcdcdc; }
.empty-text {
    margin: 45px 0 0;
    text-align: center;
    font-size: 25px;
    line-height: 35px;
    color: #b5b5b5;
    text-shadow: 1px 1px 1px #fff;
}

.bottomline { height: 2px; background: #0a1a3a; }

.support {
    position: absolute;
    right: 0;
    top: 1285px;
    width: 70px;
    height: 159px;
    background: #50ac93;
    border-radius: 25px 0 0 25px;
    display: flex;
    align-items: center;
    justify-content: center;
}
.support span {
    transform: rotate(-90deg);
    color: #fff;
    font-size: 28px;
}
```
